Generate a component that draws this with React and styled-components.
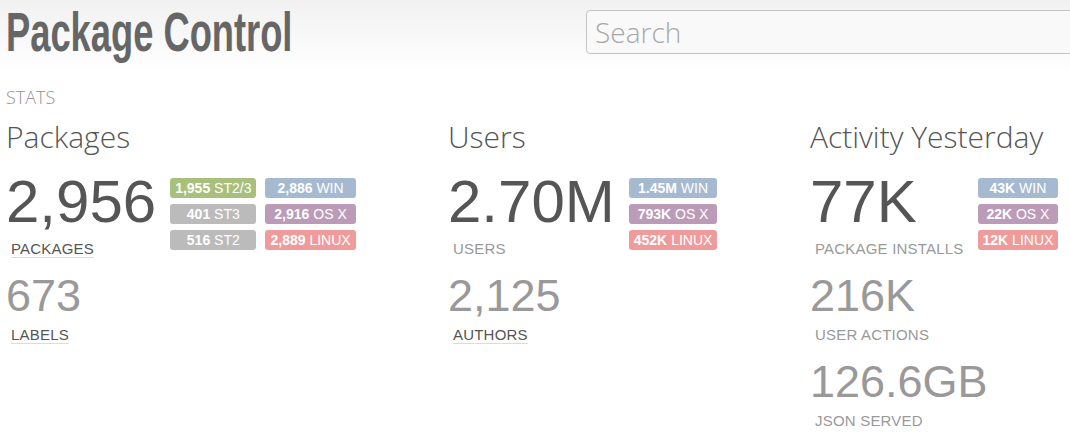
import React from 'react';
import styled, { createGlobalStyle } from 'styled-components';

const Global = createGlobalStyle`
  html, body { margin: 0; padding: 0; background: #fff; overflow: hidden; }
  body { font-family: "Liberation Sans", Arial, sans-serif; }
  * { box-sizing: border-box; }
`;

const Page = styled.div`
  width: 1070px;
  height: 444px;
  overflow: hidden;
`;

const Header = styled.header`
  display: flex;
  align-items: flex-start;
  height: 72px;
  padding-left: 6px;
  background: linear-gradient(to bottom, #f1f1f1 0%, #ffffff 100%);
`;

const Logo = styled.h1`
  flex: 0 0 580px;
  margin: 5px 0 0;
  font-family: "Liberation Sans", Arial, sans-serif;
  font-weight: 700;
  font-size: 55px;
  line-height: 1;
  color: #666;
  white-space: nowrap;
  transform: scaleX(0.66);
  transform-origin: left top;
`;

const Search = styled.input`
  flex: none;
  margin-top: 10px;
  width: 520px;
  height: 44px;
  padding: 0 8px;
  border: 1px solid #c4c4c4;
  border-radius: 4px;
  background: #f9f9f9;
  font-family: "Open Sans", sans-serif;
  font-weight: 300;
  font-size: 28px;
  color: #555;
  outline: none;
  &::placeholder { color: #a8a8a8; }
`;

const Main = styled.main`
  padding: 16px 0 0 6px;
`;

const Section = styled.h2`
  margin: 0;
  font-family: "Open Sans", sans-serif;
  font-weight: 300;
  font-size: 18px;
  line-height: 18px;
  color: #949494;
`;

const Columns = styled.div`
  display: grid;
  grid-template-columns: 442px 362px 1fr;
  margin-top: 16px;
`;

const Column = styled.section`
  display: flex;
  flex-direction: column;
  gap: 15px;
`;

const Heading = styled.h3`
  margin: 0 0 5px;
  font-family: "Open Sans", sans-serif;
  font-weight: 300;
  font-size: 30px;
  line-height: 30px;
  color: #555;
  white-space: nowrap;
`;

const Row = styled.div`
  display: flex;
  align-items: flex-start;
  gap: 14px;
`;

const Stat = styled.div`
  display: flex;
  flex-direction: column;
  align-items: flex-start;
`;

const Number = styled.div`
  font-size: ${p => (p.$big ? 60 : 45)}px;
  line-height: 1;
  color: ${p => (p.$big ? '#555' : '#999')};
  margin-bottom: 9px;
  white-space: nowrap;
`;

const Label = styled.a`
  margin-left: 5px;
  font-size: 15px;
  line-height: 15px;
  letter-spacing: 0.2px;
  padding-bottom: 1px;
  text-transform: uppercase;
  text-decoration: none;
  white-space: nowrap;
  color: ${p => (p.$link ? '#555' : '#999')};
  border-bottom: 1px solid ${p => (p.$link ? '#dcdcdc' : 'transparent')};
`;

const Badges = styled.div`
  margin-top: 6px;
  display: grid;
  grid-template-rows: repeat(3, 20px);
  grid-auto-flow: column;
  gap: 6px 9px;
`;

const colors = {
  green: '#a8c07b',
  gray: '#bbbbbb',
  blue: '#a5b9d1',
  purple: '#bc9bb9',
  red: '#ef9b9b',
};

const Badge = styled.span`
  display: block;
  height: 20px;
  line-height: 20px;
  padding: 0 5px;
  border-radius: 3px;
  background: ${p => colors[p.$color]};
  color: #fff;
  font-size: 14px;
  text-align: center;
  white-space: nowrap;
  b { font-weight: 700; }
`;

const columns = [
  {
    title: 'Packages',
    stats: [
      { n: '2,956', label: 'Packages', link: true, big: true },
      { n: '673', label: 'Labels', link: true },
    ],
    badges: [
      ['green', '1,955', 'ST2/3'],
      ['gray', '401', 'ST3'],
      ['gray', '516', 'ST2'],
      ['blue', '2,886', 'WIN'],
      ['purple', '2,916', 'OS X'],
      ['red', '2,889', 'LINUX'],
    ],
  },
  {
    title: 'Users',
    stats: [
      { n: '2.70M', label: 'Users', big: true },
      { n: '2,125', label: 'Authors', link: true },
    ],
    badges: [
      ['blue', '1.45M', 'WIN'],
      ['purple', '793K', 'OS X'],
      ['red', '452K', 'LINUX'],
    ],
  },
  {
    title: 'Activity Yesterday',
    stats: [
      { n: '77K', label: 'Package Installs', big: true },
      { n: '216K', label: 'User Actions' },
      { n: '126.6GB', label: 'JSON Served' },
    ],
    badges: [
      ['blue', '43K', 'WIN'],
      ['purple', '22K', 'OS X'],
      ['red', '12K', 'LINUX'],
    ],
  },
];

function StatItem({ s }) {
  return (
    <Stat>
      <Number $big={s.big}>{s.n}</Number>
      <Label $link={s.link} href={s.link ? '#' : undefined}>{s.label}</Label>
    </Stat>
  );
}

export default function App() {
  return (
    <Page>
      <Global />
      <Header>
        <Logo>Package Control</Logo>
        <Search type="text" placeholder="Search" />
      </Header>
      <Main>
        <Section>STATS</Section>
        <Columns>
          {columns.map(col => {
            const [first, ...rest] = col.stats;
            return (
              <Column key={col.title}>
                <Heading>{col.title}</Heading>
                <Row>
                  <StatItem s={first} />
                  <Badges>
                    {col.badges.map(([c, v, t]) => (
                      <Badge key={t + v} $color={c}>
                        <b>{v}</b> {t}
                      </Badge>
                    ))}
                  </Badges>
                </Row>
                {rest.map(s => (
                  <StatItem key={s.label} s={s} />
                ))}
              </Column>
            );
          })}
        </Columns>
      </Main>
    </Page>
  );
}
